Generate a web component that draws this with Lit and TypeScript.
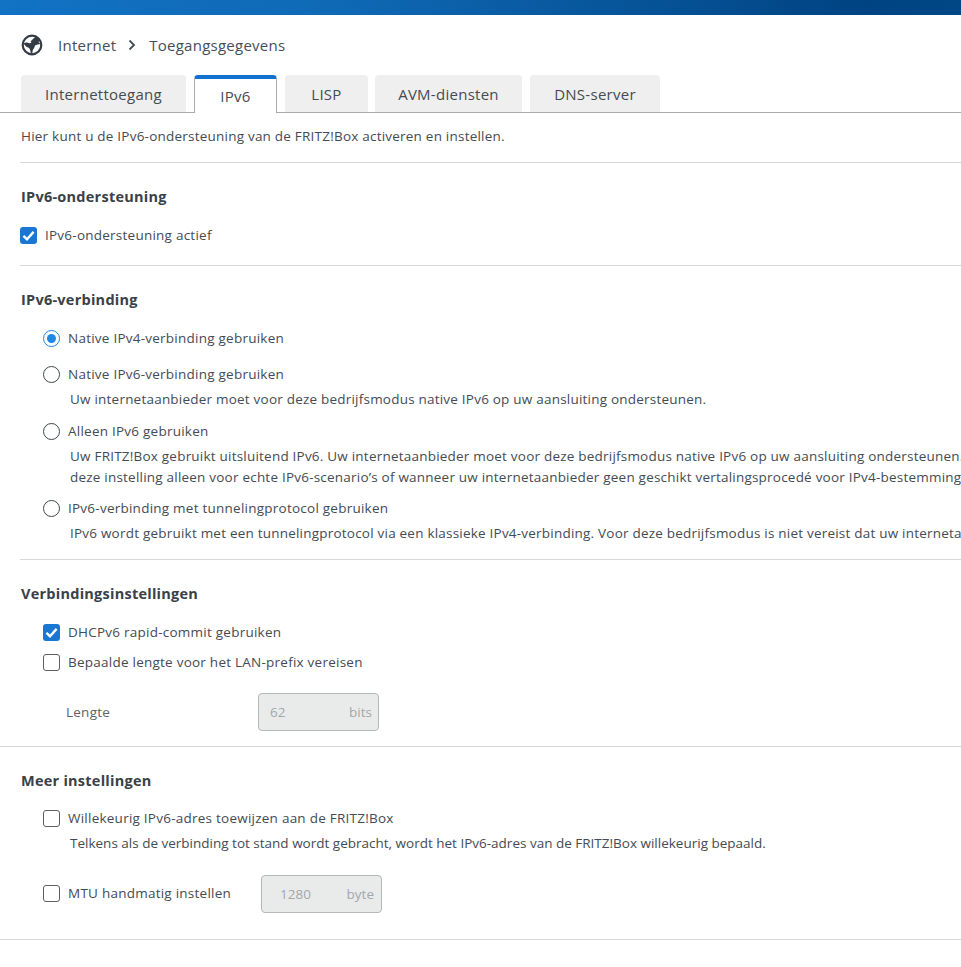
import { LitElement, html, css } from "lit";
import { customElement } from "lit/decorators.js";

const check = html`<svg viewBox="0 0 17 17" width="17" height="17"><path d="M3.4 8.8 7 12.2 13.6 4.9" fill="none" stroke="#fff" stroke-width="2.4"/></svg>`;

@customElement("app-root")
export class AppRoot extends LitElement {
  static styles = css`
    :host { display: block; width: 961px; height: 967px; overflow: hidden; background: #fff; color: #444b53;
      font-family: "Open Sans", sans-serif; font-size: 13.5px; line-height: 20px; }
    .top { height: 15px; background: linear-gradient(90deg, #1272c4 0%, #0f69b5 35%, #004382 90%, #004785 100%); }
    .crumbs { display: flex; align-items: center; height: 30px; padding: 15px 0 1px 21px; font-size: 15px; color: #444e59; letter-spacing: 0.25px; }
    .crumbs svg.globe { margin-right: 15px; }
    .crumbs svg.sep { margin: 0 13px 0 12px; }
    .tabs { display: flex; gap: 8px; padding: 14px 0 0 21px; border-bottom: 1px solid #a9abae; height: 37px; }
    .tab { height: 37px; border-radius: 4px 4px 0 0; background: #efefef; display: flex; align-items: center; justify-content: center; font-size: 15px; box-sizing: border-box; letter-spacing: 0.27px; }
    .tab.on { height: 38px; background: #fff; border: 1px solid #a9abae; border-top: 4px solid #1272d0; border-bottom: 0; margin-bottom: -1px; }
    .w1 { width: 165px; } .w2 { width: 83px; } .w3 { width: 83px; } .w4 { width: 147px; margin-left: -1px; } .w5 { width: 130px; }
    .intro { padding: 13px 0 0 21px; height: 36px; letter-spacing: 0.22px; }
    section { margin-left: 20px; border-top: 1px solid #d8d8d8; box-sizing: content-box; }
    .full { margin-left: 0; padding-left: 20px; border-bottom: 1px solid #d8d8d8; }
    .h102 { height: 102px; } .h293 { height: 293px; } .h186 { height: 186px; } .h192 { height: 192px; }
    h2 { margin: 0; padding: 24px 0 0 1px; font-size: 14.5px; font-weight: 700; line-height: 20px; color: #3a4148; letter-spacing: 0.25px; }
    .row { display: flex; align-items: center; gap: 8px; white-space: nowrap; height: 20px; letter-spacing: 0.24px; }
    .box { width: 17px; height: 17px; box-sizing: border-box; border: 1px solid #5c6066; border-radius: 3px; flex: none; background: #fff; display: flex; }
    .box.on { background: #1976d2; border: 0; }
    .radio { width: 17px; height: 17px; box-sizing: border-box; border: 1.5px solid #3f464c; border-radius: 50%; flex: none; background: #fff; display: flex; align-items: center; justify-content: center; }
    .radio.on { border-color: #1e88e5; }
    .radio.on::after { content: ""; width: 9px; height: 9px; border-radius: 50%; background: #1e88e5; }
    .ind { padding-left: 23px; }
    .desc { padding-left: 50px; white-space: nowrap; margin-top: 5px; line-height: 21px; letter-spacing: 0.215px; }
    .tel { letter-spacing: 0; }
    .m-a { margin-top: 18px; } .m-b { margin-top: 17px; } .m-c { margin-top: 11px; } .m-d { margin-top: 10px; } .m-e { margin-top: 10px; }
    .m-f { margin-top: 16px; }
    .f { height: 38px; }
    .lengte { padding-left: 46px; gap: 0; margin-top: 21px; }
    .lengte .lab { width: 192px; color: #5c6268; }
    .mtu { margin-top: 21px; }
    .mtu .lab { width: 185px; margin-bottom: 2px; }
    .mtu .box { margin-bottom: 2px; }
    .field { width: 121px; height: 38px; box-sizing: border-box; border: 1px solid #b4b6b8; border-radius: 4px; background: #e9ebea; color: #a3a7aa; display: flex; justify-content: space-between; align-items: center; padding: 0 6px 0 11px; letter-spacing: 0; }
    .pl { padding-left: 7px; }
    .pr { padding-right: 1px; }
  `;
  render() {
    return html`
      <div class="top"></div>
      <div class="crumbs">
        <svg class="globe" width="22" height="22" viewBox="0 0 22 22"><circle cx="11" cy="11" r="9.3" fill="none" stroke="#333b44" stroke-width="2.2"/><path fill="#333b44" d="M2.500 9.500C4 8.500 5.500 8.200 7 8.700 8 9.600 9.500 9 10.500 8.500L9.500 7.500 11 6 13 4 14.800 2.500 19 6 17.500 8 19.500 10 16.500 10.500 14 11.500 13.200 14 11.800 16 11.300 19.500 10 19.500 9 15.500C8.500 13.500 6 13.200 4.800 12.200z"/></svg>
        <span>Internet</span>
        <svg class="sep" width="8" height="12" viewBox="0 0 8 12"><path d="M1.500 1.500 6 6l-4.500 4.500" fill="none" stroke="#444e59" stroke-width="1.800"/></svg>
        <span>Toegangsgegevens</span>
      </div>
      <div class="tabs">
        <div class="tab w1">Internettoegang</div>
        <div class="tab on w2">IPv6</div>
        <div class="tab w3">LISP</div>
        <div class="tab w4">AVM-diensten</div>
        <div class="tab w5">DNS-server</div>
      </div>
      <div class="intro">Hier kunt u de IPv6-ondersteuning van de FRITZ!Box activeren en instellen.</div>
      <section class="h102">
        <h2>IPv6-ondersteuning</h2>
        <div class="row m-a"><span class="box on">${check}</span>IPv6-ondersteuning actief</div>
      </section>
      <section class="h293">
        <h2>IPv6-verbinding</h2>
        <div class="row ind m-a"><span class="radio on"></span>Native IPv4-verbinding gebruiken</div>
        <div class="row ind m-f"><span class="radio"></span>Native IPv6-verbinding gebruiken</div>
        <div class="desc">Uw internetaanbieder moet voor deze bedrijfsmodus native IPv6 op uw aansluiting ondersteunen.</div>
        <div class="row ind m-c"><span class="radio"></span>Alleen IPv6 gebruiken</div>
        <div class="desc">Uw FRITZ!Box gebruikt uitsluitend IPv6. Uw internetaanbieder moet voor deze bedrijfsmodus native IPv6 op uw aansluiting ondersteunen. Gebruik<br>deze instelling alleen voor echte IPv6-scenario’s of wanneer uw internetaanbieder geen geschikt vertalingsprocedé voor IPv4-bestemmingen biedt.</div>
        <div class="row ind m-e"><span class="radio"></span>IPv6-verbinding met tunnelingprotocol gebruiken</div>
        <div class="desc">IPv6 wordt gebruikt met een tunnelingprotocol via een klassieke IPv4-verbinding. Voor deze bedrijfsmodus is niet vereist dat uw internetaanbieder IPv6 ondersteunt.</div>
      </section>
      <section class="h186">
        <h2>Verbindingsinstellingen</h2>
        <div class="row ind m-a"><span class="box on">${check}</span>DHCPv6 rapid-commit gebruiken</div>
        <div class="row ind m-d"><span class="box"></span>Bepaalde lengte voor het LAN-prefix vereisen</div>
        <div class="row f lengte"><span class="lab">Lengte</span><span class="field"><span>62</span><span>bits</span></span></div>
      </section>
      <section class="h192 full">
        <h2>Meer instellingen</h2>
        <div class="row ind m-b"><span class="box"></span>Willekeurig IPv6-adres toewijzen aan de FRITZ!Box</div>
        <div class="desc tel">Telkens als de verbinding tot stand wordt gebracht, wordt het IPv6-adres van de FRITZ!Box willekeurig bepaald.</div>
        <div class="row ind f mtu"><span class="box"></span><span class="lab">MTU handmatig instellen</span><span class="field"><span class="pl">1280</span><span class="pr">byte</span></span></div>
      </section>
    `;
  }
}
